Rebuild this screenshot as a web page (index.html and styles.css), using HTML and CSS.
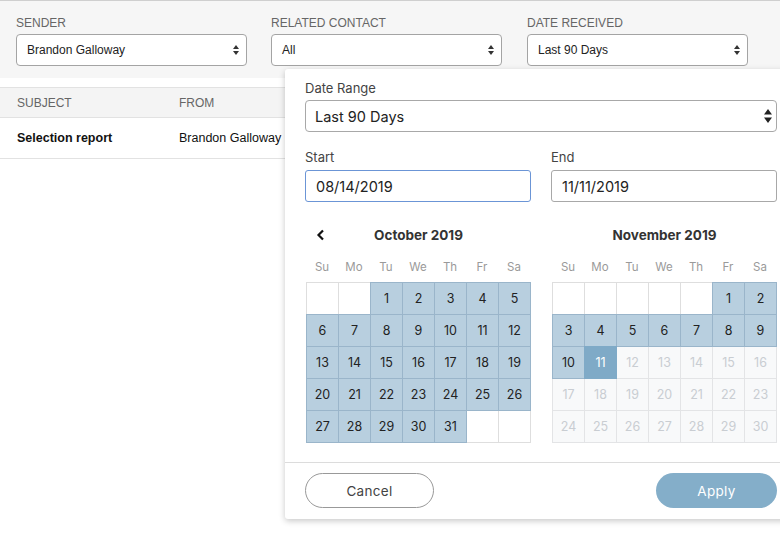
FILE: index.html
```html
<!doctype html>
<html lang="en">
<head>
  <meta charset="UTF-8" />
  <title>Messages - Date Filter</title>
  <link rel="stylesheet" href="styles.css">
</head>
<body>
  <header class="filters">
    <div class="filter filter-sender">
      <div class="filter-label">Sender</div>
      <div class="fake-select">
        <span>Brandon Galloway</span>
        <svg class="updown" width="6" height="10" viewBox="0 0 6 10"><path d="M3 0L6 4H0z M3 10L0 6H6z" fill="#333"/></svg>
      </div>
    </div>
    <div class="filter filter-contact">
      <div class="filter-label">Related Contact</div>
      <div class="fake-select">
        <span>All</span>
        <svg class="updown" width="6" height="10" viewBox="0 0 6 10"><path d="M3 0L6 4H0z M3 10L0 6H6z" fill="#333"/></svg>
      </div>
    </div>
    <div class="filter filter-date">
      <div class="filter-label">Date Received</div>
      <div class="fake-select">
        <span>Last 90 Days</span>
        <svg class="updown" width="6" height="10" viewBox="0 0 6 10"><path d="M3 0L6 4H0z M3 10L0 6H6z" fill="#333"/></svg>
      </div>
    </div>
  </header>

  <table class="messages">
    <thead>
      <tr><th class="col-subject">Subject</th><th>From</th></tr>
    </thead>
    <tbody>
      <tr><td class="col-subject subject">Selection report</td><td>Brandon Galloway</td></tr>
    </tbody>
  </table>

  <!-- date range popover -->
  <div class="range-popup">
    <div class="popup-body">
      <label class="field-label">Date Range</label>
      <div class="fake-select big">
        <span>Last 90 Days</span>
        <svg class="updown" width="8" height="14" viewBox="0 0 8 14"><path d="M4 0L8 5.5H0z M4 14L0 8.5H8z" fill="#222"/></svg>
      </div>

      <div class="range-inputs">
        <div class="range-field">
          <label class="field-label">Start</label>
          <div class="text-input focused">08/14/2019</div>
        </div>
        <div class="range-field">
          <label class="field-label">End</label>
          <div class="text-input">11/11/2019</div>
        </div>
      </div>

      <div class="calendars">
        <div class="calendar">
          <div class="cal-head">
            <svg class="nav" width="9" height="12" viewBox="0 0 9 12"><path d="M7 1.5L2.5 6L7 10.5" fill="none" stroke="#111" stroke-width="2.2"/></svg>
            <div class="month">October 2019</div>
            <span></span>
          </div>
          <div class="weekdays"><span>Su</span><span>Mo</span><span>Tu</span><span>We</span><span>Th</span><span>Fr</span><span>Sa</span></div>
          <div class="days" id="oct"></div>
        </div>
        <div class="calendar">
          <div class="cal-head">
            <span></span>
            <div class="month">November 2019</div>
            <span></span>
          </div>
          <div class="weekdays"><span>Su</span><span>Mo</span><span>Tu</span><span>We</span><span>Th</span><span>Fr</span><span>Sa</span></div>
          <div class="days" id="nov"></div>
        </div>
      </div>
    </div>
    <footer class="popup-footer">
      <button class="btn btn-cancel">Cancel</button>
      <button class="btn btn-apply">Apply</button>
    </footer>
  </div>

  <script>
    function fillMonth(el, offset, total, endDay) {
      let html = '';
      for (let i = 0; i < 35; i++) {
        const d = i - offset + 1;
        if (d < 1 || d > total) {
          html += '<div class="day empty"></div>';
        } else if (endDay && d === endDay) {
          html += '<div class="day end">' + d + '</div>';
        } else if (endDay && d > endDay) {
          html += '<div class="day future">' + d + '</div>';
        } else {
          html += '<div class="day in-range">' + d + '</div>';
        }
      }
      el.innerHTML = html;
    }
    fillMonth(document.getElementById('oct'), 2, 31, 0);
    fillMonth(document.getElementById('nov'), 5, 30, 11);
  </script>
</body>
</html>
```

FILE: styles.css
```css
* {
  margin: 0;
  padding: 0;
  box-sizing: border-box;
}

html, body {
  height: 100%;
  overflow: hidden;
}

body {
  position: relative;
  font-family: "Liberation Sans", Arial, sans-serif;
  background: #fff;
  color: #222;
}

.filters {
  display: flex;
  height: 78px;
  padding: 15px 0 0 16px;
  background: #f6f6f6;
  border-top: 1px solid #cfcfcf;
}

.filter-label {
  font-size: 12px;
  line-height: 14px;
  color: #666;
  text-transform: uppercase;
  margin-bottom: 4px;
}

.filter-sender { width: 231px; margin-right: 24px; }
.filter-contact { width: 231px; margin-right: 25px; }
.filter-date { width: 221px; }

.fake-select {
  display: flex;
  align-items: center;
  justify-content: space-between;
  height: 32px;
  padding: 0 7px 0 10px;
  background: #fff;
  border: 1px solid #a4a4a4;
  border-radius: 4px;
  font-size: 12px;
  color: #222;
}

.fake-select.big {
  padding: 0 4px 0 9px;
  font-family: Inter, "Liberation Sans", sans-serif;
  font-size: 14.5px;
  border-color: #a8a8a8;
}

.messages {
  width: 100%;
  margin-top: 9px;
  border-collapse: collapse;
  font-size: 12px;
}

.messages th {
  height: 30px;
  padding: 0 0 0 17px;
  background: #f4f4f4;
  border-top: 1px solid #e2e2e2;
  border-bottom: 1px solid #e2e2e2;
  color: #666;
  font-weight: normal;
  text-align: left;
  text-transform: uppercase;
}

.messages td {
  height: 41px;
  padding: 0 0 0 17px;
  border-bottom: 1px solid #e2e2e2;
  font-size: 12.5px;
  color: #111;
}

.messages th + th,
.messages td + td {
  padding-left: 0;
}

.col-subject { width: 179px; }
.subject { font-weight: bold; }

/* popover */
.range-popup {
  position: absolute;
  top: 69px;
  left: 285px;
  width: 512px;
  background: #fff;
  border-radius: 3px;
  box-shadow: 0 2px 6px rgba(0, 0, 0, 0.22);
  font-family: Inter, "Liberation Sans", sans-serif;
}

.popup-body {
  padding: 11px 20px 20px 20px;
}

.field-label {
  display: block;
  font-size: 13px;
  line-height: 16px;
  color: #444;
  margin-bottom: 4px;
}

.range-inputs {
  display: flex;
  gap: 20px;
  margin-top: 17px;
}

.range-field {
  width: 226px;
}

.range-field .field-label {
  margin-bottom: 5px;
}

.text-input {
  height: 32px;
  padding: 0 10px;
  display: flex;
  align-items: center;
  border: 1px solid #a8a8a8;
  border-radius: 3px;
  font-size: 14.5px;
  color: #222;
}

.text-input.focused {
  border-color: #6b95d6;
}

.calendars {
  display: flex;
  gap: 21px;
  margin-top: 21px;
  padding-left: 1px;
}

.calendar {
  width: 225px;
}

.cal-head {
  display: grid;
  grid-template-columns: 28px 1fr 28px;
  align-items: center;
  height: 24px;
}

.nav {
  margin-left: 10px;
}

.month {
  text-align: center;
  font-size: 13.5px;
  font-weight: 700;
  color: #333;
}

.weekdays {
  display: grid;
  grid-template-columns: repeat(7, 32px);
  margin-top: 12px;
  margin-bottom: 7px;
  font-size: 11.5px;
  line-height: 16px;
  color: #9a9a9a;
  text-align: center;
}

.days {
  display: grid;
  grid-template-columns: repeat(7, 32px);
  grid-auto-rows: 32px;
}

.day {
  width: 33px;
  height: 33px;
  display: flex;
  align-items: center;
  justify-content: center;
  font-size: 12.5px;
  border: 1px solid #dedede;
  background: #fff;
  color: #222;
}

.day.in-range {
  position: relative;
  z-index: 1;
  background: #b8cfdf;
  border-color: #9ab5ca;
}

.day.end {
  position: relative;
  z-index: 1;
  background: #7faac7;
  border-color: #7faac7;
  color: #fff;
}

.day.future {
  background: #f8f9fa;
  border-color: #e3e4e6;
  color: #c9cdd2;
}

.popup-footer {
  display: flex;
  justify-content: space-between;
  padding: 10px 20px 11px 20px;
  border-top: 1px solid #dcdcdc;
}

.btn {
  height: 35px;
  border-radius: 18px;
  font-family: Inter, "Liberation Sans", sans-serif;
  font-size: 13.5px;
  letter-spacing: 0.3px;
}

.btn-cancel {
  width: 129px;
  background: #fff;
  border: 1px solid #999;
  color: #444;
}

.btn-apply {
  width: 121px;
  background: #84aec9;
  border: none;
  color: #fff;
}
```
